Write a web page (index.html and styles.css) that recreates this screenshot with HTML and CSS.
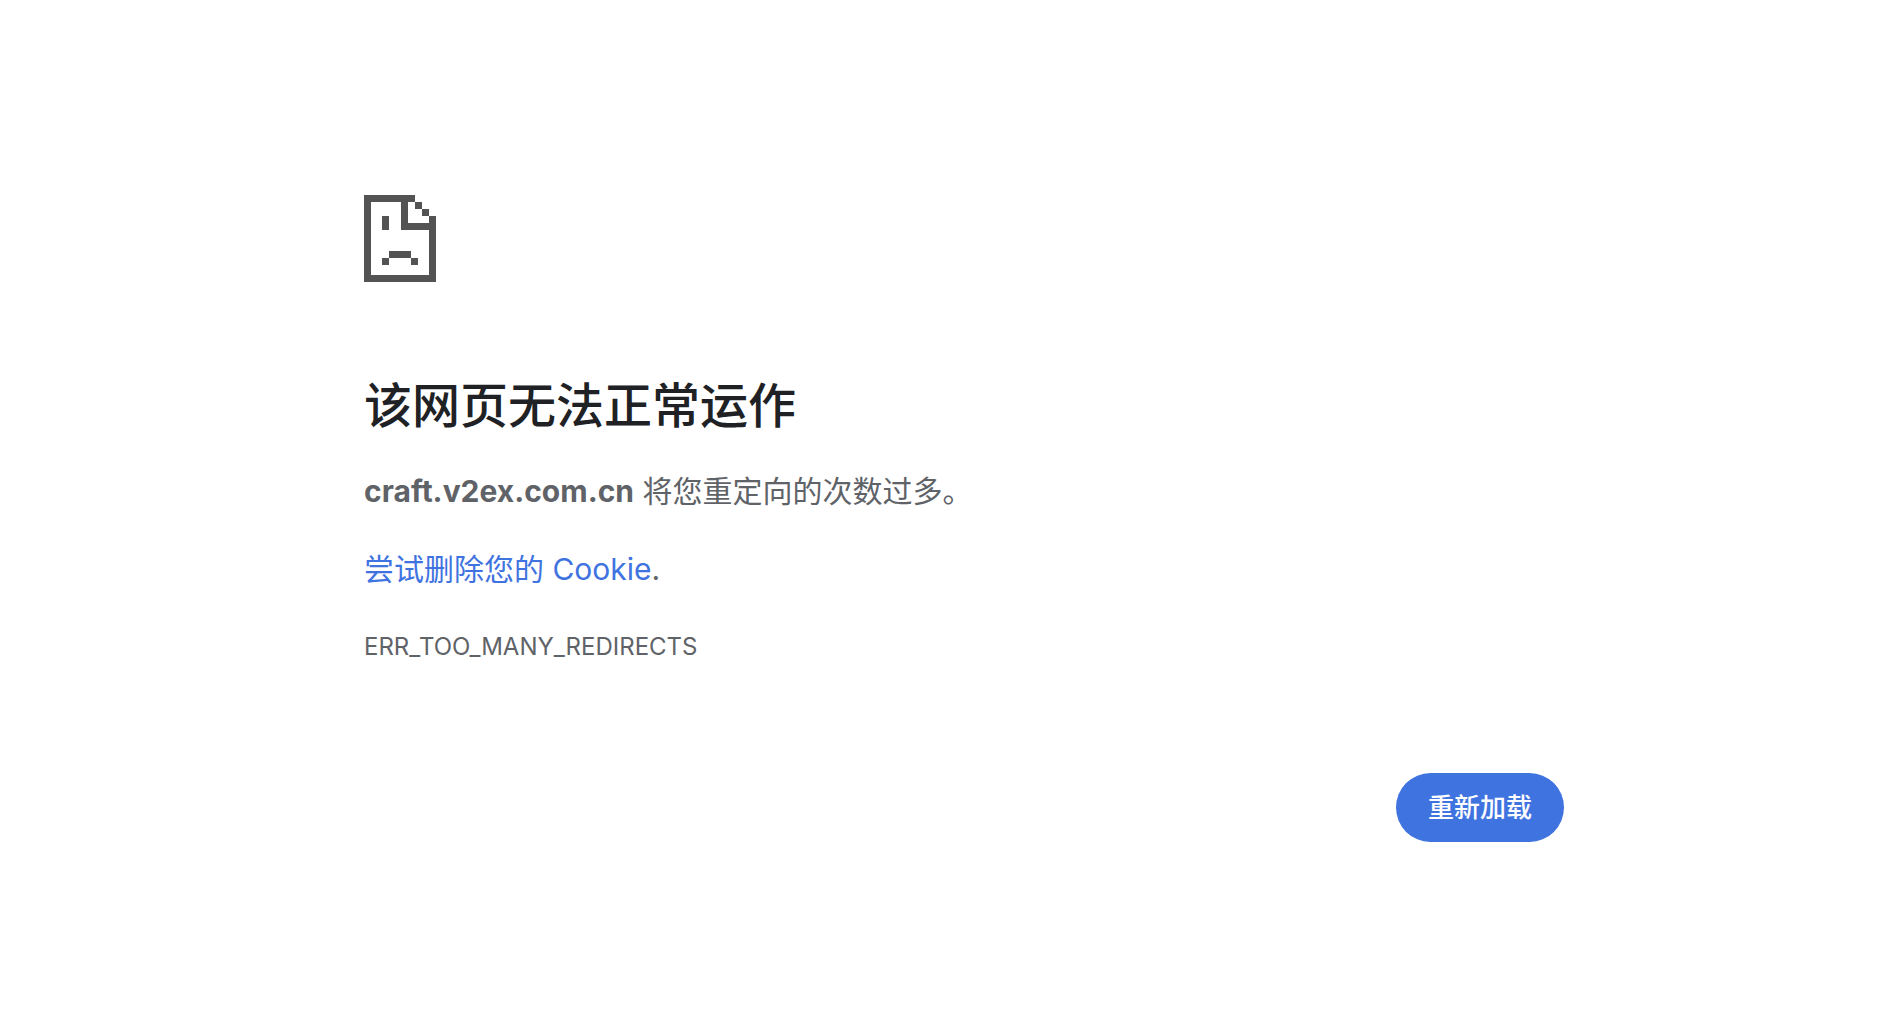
FILE: index.html
```
<!DOCTYPE html>
<html lang="zh-CN">
<head>
  <meta charset="UTF-8" />
  <meta name="viewport" content="width=device-width, initial-scale=1.0"/>
  <title>craft.v2ex.com.cn</title>
  <link rel="stylesheet" href="styles.css">
</head>
<body>
  <main class="interstitial">
    <!-- Sad page icon -->
    <svg class="icon" viewBox="0 0 72 87" shape-rendering="crispEdges" aria-hidden="true">
      <path d="M0 0H51V7H44V28H65V21H72V87H0ZM7 7V80H65V35H37V7Z" fill-rule="evenodd"/>
      <path d="M51 7H58V14H51ZM58 14H65V21H58Z"/>
      <path d="M18 21H25V35H18Z"/>
      <path d="M25 56H47V63H25ZM18 63H25V70H18ZM47 63H54V70H47Z"/>
    </svg>

    <h1>该网页无法正常运作</h1>
    <p><strong>craft.v2ex.com.cn</strong> 将您重定向的次数过多。</p>
    <p><a href="#">尝试删除您的 Cookie</a>.</p>
    <div class="error-code">ERR_TOO_MANY_REDIRECTS</div>

    <div class="nav">
      <button id="reloadButton" type="button">重新加载</button>
    </div>
  </main>

  <script>
    document.getElementById('reloadButton').addEventListener('click', () => {
      location.reload();
    });
  </script>
</body>
</html>
```
FILE: styles.css
```
body {
  font-family: Inter, "Noto Sans CJK SC", sans-serif;
  background-color: #fff;
  color: #5f6368;
  margin: 0;
  padding-left: 24px;
  font-size: 30px;
  line-height: 48px;
}
.interstitial {
  max-width: 1200px;
  margin: 0 auto;
  padding-top: 195px;
}
.icon {
  display: block;
  width: 72px;
  height: 87px;
  fill: #535353;
}
h1 {
  color: #202124;
  font-size: 48px;
  font-weight: 500;
  line-height: 60px;
  margin: 94px 0 31px;
}
p {
  margin: 0 0 30px;
}
a {
  color: #3f73df;
  text-decoration: none;
}
.error-code {
  font-size: 24px;
}
.nav {
  display: flex;
  justify-content: flex-end;
  margin-top: 102px;
}
button {
  background-color: #3f73df;
  border: 0;
  border-radius: 35px;
  color: #fff;
  cursor: pointer;
  font-family: inherit;
  font-size: 26px;
  font-weight: 500;
  line-height: 37px;
  padding: 16px 32px;
}
```
